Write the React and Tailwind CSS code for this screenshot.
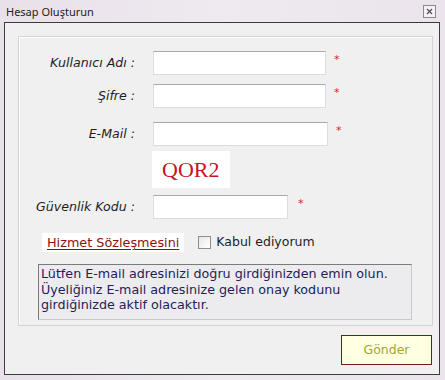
import React from "react";

const V = { fontFamily: '"DejaVu Sans", Verdana, sans-serif' };

function Field({ label, width, star, starGap = "ml-[8px]" }) {
  return (
    <div className="flex items-center">
      <div className="w-[118px] text-right italic text-[12.6px] text-[#1e1e1e] pr-[2px] whitespace-nowrap" style={V}>
        {label}
      </div>
      <div
        className="ml-[16px] h-[24px] bg-white border border-[#dcdcdc] border-t-[#a8a8a8]"
        style={{ width }}
      />
      {star && (
        <span className={`${starGap} text-[#d22] text-[11px] -mt-[5px]`} style={V}>
          *
        </span>
      )}
    </div>
  );
}

export default function App() {
  return (
    <div
      className="w-[445px] h-[380px] bg-gradient-to-r from-[#e9e1ea] via-[#efe9f0] to-[#ebe4ec] flex flex-col"
    >
      <div className="h-[22px] flex items-center justify-between pl-[6px] pr-[9px]">
        <span className="text-[11px] text-[#222] leading-none" style={{ fontFamily: '"Noto Sans", "Open Sans", sans-serif' }}>
          Hesap Oluşturun
        </span>
        <div className="w-[13px] h-[13px] border border-[#8a8a8a] bg-[#f4f0f4] flex items-center justify-center">
          <svg width="7" height="7" viewBox="0 0 7 7">
            <path d="M1 1L6 6M6 1L1 6" stroke="#555" strokeWidth="1.3" />
          </svg>
        </div>
      </div>
      <div className="ml-[4px] mr-[5px] h-[353px] border border-[#3c3c3c] bg-[#f0f0f0] flex flex-col">
        <div className="ml-[13px] mr-[6px] mt-[13px] h-[290px] border border-[#d4d4d4] shadow-[inset_1px_1px_0_#ffffff] pt-[14px] flex flex-col">
          <Field label="Kullanıcı Adı :" width={173} star />
          <div className="h-[9px]" />
          <Field label="Şifre :" width={173} star />
          <div className="h-[14px]" />
          <Field label="E-Mail :" width={175} star />
          <div className="ml-[133px] mt-[5px] w-[78px] h-[37px] bg-white flex items-center pl-[10px]">
            <span className="text-[22px] text-[#c8141e] leading-none" style={{ fontFamily: '"Liberation Serif", "Times New Roman", serif' }}>
              QOR2
            </span>
          </div>
          <div className="h-[7px]" />
          <Field label="Güvenlik Kodu :" width={135} star starGap="ml-[10px]" />
          <div className="flex items-center mt-[14px] h-[19px]">
            <span
              className="ml-[23px] bg-white px-[5px] h-[19px] flex items-center text-[12.8px] text-[#8b1010] underline underline-offset-2 whitespace-nowrap"
              style={V}
            >
              Hizmet Sözleşmesini
            </span>
            <span className="ml-[14px] w-[13px] h-[13px] border border-[#8e8e8e] bg-gradient-to-br from-[#e6e6e6] to-[#ffffff]" />
            <span className="ml-[5px] text-[12.5px] text-[#1e1e1e] whitespace-nowrap" style={V}>
              Kabul ediyorum
            </span>
          </div>
          <div
            className="ml-[19px] mt-[12px] w-[374px] h-[56px] bg-[#ececee] border border-[#c8c8c8] border-t-[#7a7a7a] border-l-[#7a7a7a] px-[2px] pt-[1px] text-[12.7px] leading-[15.5px] text-[#1f2158] whitespace-nowrap"
            style={V}
          >
            Lütfen E-mail adresinizi doğru girdiğinizden emin olun.
            <br />
            Üyeliğiniz E-mail adresinize gelen onay kodunu
            <br />
            girdiğinizde aktif olacaktır.
          </div>
        </div>
        <div className="flex justify-end mr-[7px] mt-[9px]">
          <div
            className="w-[91px] h-[30px] bg-[#ffffe1] border border-[#7a1616] flex items-center justify-center text-[12.5px] text-[#a3a43c]"
            style={V}
          >
            Gönder
          </div>
        </div>
      </div>
    </div>
  );
}
